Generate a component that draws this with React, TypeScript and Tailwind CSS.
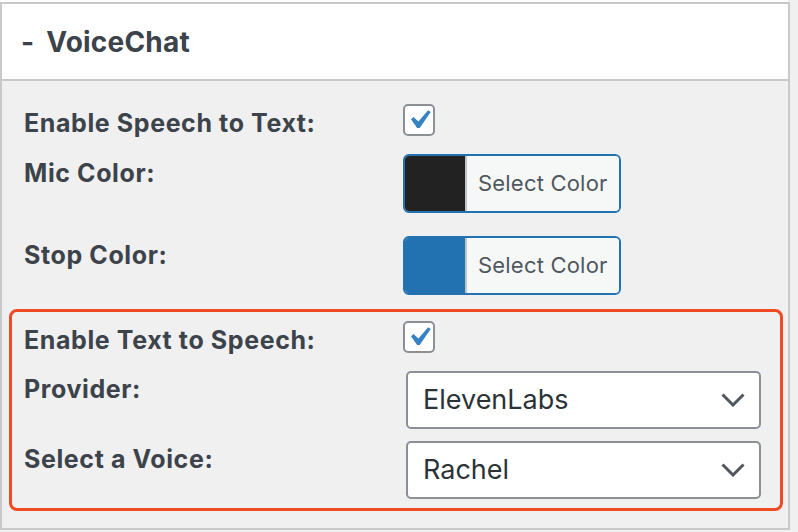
import React from "react";

const font = { fontFamily: "Inter, 'Noto Sans', 'Liberation Sans', sans-serif" };

function Check() {
  return (
    <div className="relative w-[32px] h-[32px] rounded-[5px] border-2 border-[#8c8f94] bg-white shrink-0">
      <svg viewBox="0 0 20 20" className="absolute left-[-5px] top-[-5px] w-[38px] h-[38px]">
        <path d="M14.83 4.89l1.34.94-5.81 8.38H9.02L5.78 9.67l1.34-1.25 2.57 2.4z" fill="#3582c4" />
      </svg>
    </div>
  );
}

function ColorButton({ swatch }: { swatch: string }) {
  return (
    <div className="flex w-[218px] h-[59px] rounded-[6px] border-2 border-[#2271b1] overflow-hidden shrink-0">
      <div className={`w-[60px] h-full ${swatch}`} />
      <div className="flex-1 flex items-center bg-[#f6f7f7] border-l-2 border-[#c3c4c7] pl-[11px] text-[22px] tracking-[0.2px] text-[#50575e]">
        Select Color
      </div>
    </div>
  );
}

function Select({ value }: { value: string }) {
  return (
    <div className="flex items-center justify-between w-[355px] h-[58px] rounded-[5px] border-2 border-[#8c8f94] bg-white pl-[15px] pr-[14px] text-[27px] text-[#2c3338] shrink-0">
      <span>{value}</span>
      <svg width="24" height="14" viewBox="0 0 24 14">
        <polyline points="1.5,1.5 12,12 22.5,1.5" fill="none" stroke="#50575e" strokeWidth="3" />
      </svg>
    </div>
  );
}

function Label({ children, w = "w-[379px]", pt = "pt-[3px]" }: { children: React.ReactNode; w?: string; pt?: string }) {
  return (
    <div className={`${w} ${pt} shrink-0 text-[25px] leading-[32px] font-bold tracking-[0.6px] text-[#3c434a] whitespace-nowrap`}>{children}</div>
  );
}

export default function App() {
  return (
    <div className="w-[798px] h-[532px] bg-[#f0f0f1] overflow-hidden" style={font}>
      <div className="h-[2px] w-[788px] bg-white" />
      <div className="w-[790px] border-2 border-[#c8c9cb]">
        <div className="h-[77px] bg-white border-b-2 border-[#c8c9cb] flex items-center pl-[19px] text-[28px] font-bold tracking-[0.2px] text-[#3c434a]">
          <span className="mr-[12px]">-</span>
          <span>VoiceChat</span>
        </div>
        <div className="bg-[#f0f0f1] pt-[23px] pb-[17px]">
          <div className="flex items-start pl-[22px] h-[32px]">
            <Label>Enable Speech to Text:</Label>
            <Check />
          </div>
          <div className="flex items-start pl-[22px] mt-[18px]">
            <Label>Mic Color:</Label>
            <ColorButton swatch="bg-[#222222]" />
          </div>
          <div className="flex items-start pl-[22px] mt-[23px]">
            <Label>Stop Color:</Label>
            <ColorButton swatch="bg-[#2271b1]" />
          </div>
          <div className="mt-[14px] ml-[7px] mr-[5px] border-[3px] border-[#f04a23] rounded-[8px] pl-[12px] pt-[9px] pb-[9px]">
            <div className="flex items-start h-[32px]">
              <Label>Enable Text to Speech:</Label>
              <Check />
            </div>
            <div className="flex items-start mt-[18px]">
              <Label w="w-[382px]" pt="pt-[2px]">Provider:</Label>
              <Select value="ElevenLabs" />
            </div>
            <div className="flex items-start mt-[12px]">
              <Label w="w-[382px]" pt="pt-[2px]">Select a Voice:</Label>
              <Select value="Rachel" />
            </div>
          </div>
        </div>
      </div>
    </div>
  );
}
